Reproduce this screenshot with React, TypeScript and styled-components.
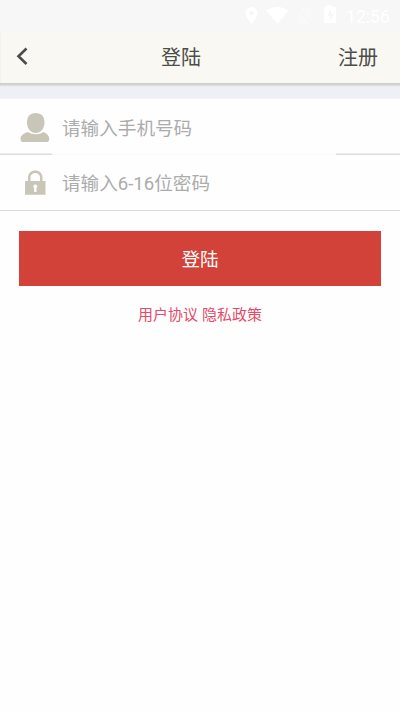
import React from "react";
import styled, { createGlobalStyle } from "styled-components";

const GlobalStyle = createGlobalStyle`
  * { box-sizing: border-box; }
  body {
    margin: 0;
    background: #fefefe;
    font-family: Roboto, "Noto Sans CJK SC", sans-serif;
  }
`;

const Screen = styled.main`
  display: flex;
  flex-direction: column;
  height: 711px;
  overflow: hidden;
  background: #fefefe;
`;

const StatusBar = styled.div`
  flex: none;
  display: flex;
  justify-content: flex-end;
  height: 31px;
  padding-right: 9px;
  background: #f7f7f7;
  color: #fff;
`;

const StatusIcons = styled.svg`
  width: 96px;
  height: 31px;
  margin-right: 5px;
  fill: currentColor;
`;

const Clock = styled.time`
  width: 45px;
  font-size: 17.6px;
  line-height: 34px;
  white-space: nowrap;
`;

const Header = styled.header`
  flex: none;
  display: grid;
  grid-template-columns: 100px 1fr 100px;
  align-items: center;
  height: 52px;
  padding: 0 22px 0 15px;
  border-left: 1px solid #f2f2ef;
  background: #f9f8f2;
  color: #4c4c4a;
`;

const BackButton = styled.button`
  display: flex;
  width: 14px;
  padding: 0;
  border: 0;
  background: none;
  color: inherit;
`;

const Title = styled.h1`
  margin: 0 0 0 45px;
  padding-top: 2px;
  font-size: 20px;
  font-weight: 400;
  line-height: 50px;
`;

const HeaderLink = styled.a`
  justify-self: end;
  padding-top: 2px;
  font-size: 20px;
  line-height: 50px;
`;

const Gap = styled.div`
  flex: none;
  height: 16px;
  background: linear-gradient(#cdcccd 0, #d5d4d6 2px, #e8e8ec 3px, #eff0f5 4px, #eff0f5 15px, #f8f9fb 16px);
`;

const Field = styled.label<{ $height: number }>`
  flex: none;
  display: flex;
  align-items: center;
  height: ${(p) => p.$height}px;
  padding-left: 20px;
`;

const FieldIcon = styled.svg`
  flex: none;
  width: 30px;
  height: 32px;
  margin-right: 12px;
  fill: #cac6b7;
`;

const Input = styled.input<{ $drop: number }>`
  flex: 1;
  min-width: 0;
  height: 46px;
  padding: ${(p) => p.$drop}px 0 0;
  border: 0;
  outline: 0;
  background: none;
  font: 18.6px/40px Roboto, "Noto Sans CJK SC", sans-serif;
  &::placeholder { color: #acacac; opacity: 1; }
`;

const Divider = styled.div<{ $broken?: boolean }>`
  flex: none;
  height: ${(p) => (p.$broken ? 2 : 1)}px;
  background: ${(p) =>
    p.$broken
      ? "linear-gradient(90deg, transparent 52px, #fbfbfb 52px 336px, transparent 336px), linear-gradient(#ececea 50%, #dededa 50%)"
      : "#d9d9d4"};
`;

const SubmitButton = styled.button`
  flex: none;
  height: 55px;
  margin: 20px 19px 0;
  padding: 4px 0 0;
  border: 0;
  background: #d24238;
  color: #fff;
  font: 18.6px/51px Roboto, "Noto Sans CJK SC", sans-serif;
`;

const Legal = styled.nav`
  display: flex;
  justify-content: center;
  gap: 4px;
  margin-top: 18px;
  color: #e54b68;
  font-size: 15px;
  line-height: 22px;
`;

export default function App() {
  return (
    <Screen>
      <GlobalStyle />
      <StatusBar>
        <StatusIcons viewBox="0 0 96 31">
          <path fillRule="evenodd" d="M6.5 7a6 6 0 0 0-6 6c0 4.500 6 11 6 11s6-6.500 6-11a6 6 0 0 0-6-6Zm0 3.800a2.200 2.200 0 1 1 0 4.400 2.200 2.200 0 0 1 0-4.400Z" />
          <path d="M21 10.500c6.500-4.700 16-4.700 22.500 0L32.500 24Z" />
          <path opacity=".3" d="M57.500 8H66v12.500L56 10Zm-4.500 3.500L65 24H53Z" />
          <path fillRule="evenodd" d="M79 7h2.500V5h5v2H91v16H79Zm7 2-4 7h3v5l4-7h-3Z" />
        </StatusIcons>
        <Clock>12:56</Clock>
      </StatusBar>
      <Header>
        <BackButton aria-label="返回">
          <svg width="14" height="20" viewBox="0 0 14 20" fill="none" stroke="currentColor" strokeWidth="2.600">
            <path d="M10.500 1.500 2.500 9.300l8 7.700" />
          </svg>
        </BackButton>
        <Title>登陆</Title>
        <HeaderLink>注册</HeaderLink>
      </Header>
      <Gap />
      <Field $height={54}>
        <FieldIcon viewBox="0 0 30 32">
          <path d="M15.700 3C21.500 3 24.500 6.600 24.500 12.500S20.700 23 15.700 23 7 18.500 7 12.500 10 3 15.700 3Z" />
          <path d="M8 22.700c4 3 11.300 3 15.300 0 4 1.500 6 4 6 7 0 2-1 3.100-3 3.100H3.500c-2 0-3-1.100-3-3.100 0-3 2.500-5.500 7.500-7Z" transform="translate(0 -.8)" />
        </FieldIcon>
        <Input $drop={6} type="tel" placeholder="请输入手机号码" />
      </Field>
      <Divider $broken />
      <Field $height={55}>
        <FieldIcon viewBox="0 0 30 32">
          <path fillRule="evenodd" d="M5 14h3v-3.500c0-9.500 14.500-9.500 14.500 0V14H25.500v13.700H5Zm5.500 0H20v-3.500c0-6-9.500-6-9.500 0Zm4.800 3.500a2 2 0 0 0-1.200 3.600V25h2.400v-3.900a2 2 0 0 0-1.200-3.600Z" />
        </FieldIcon>
        <Input $drop={2} type="password" placeholder="请输入6-16位密码" />
      </Field>
      <Divider />
      <SubmitButton>登陆</SubmitButton>
      <Legal>
        <a>用户协议</a>
        <a>隐私政策</a>
      </Legal>
    </Screen>
  );
}
